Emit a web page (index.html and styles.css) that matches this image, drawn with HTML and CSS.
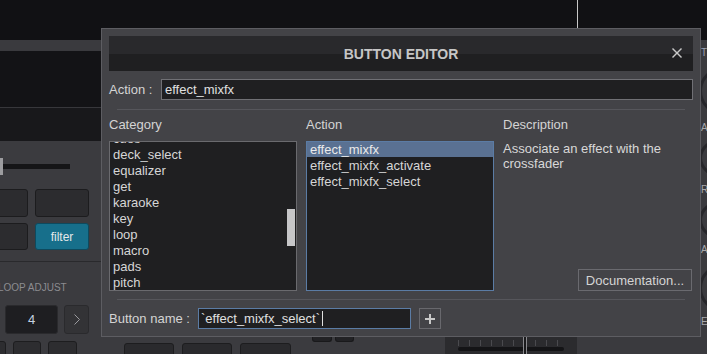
FILE: index.html
```html
<!DOCTYPE html>
<html lang="en">
<head>
    <link rel="stylesheet" href="styles.css">
    <meta charset="UTF-8">
    <title>Button Editor</title>
</head>
<body>

<div class="app">
    <div class="topbar"><div class="topline"></div></div>
    <div class="main">
        <div class="deck">
            <div class="band"></div>
            <div class="screen"></div>
            <div class="screen-low"></div>
            <div class="panel">
                <div class="slider">
                    <div class="slider-handle"></div>
                    <div class="slider-track"></div>
                </div>
                <div class="pad-grid">
                    <div class="pad"></div>
                    <div class="pad"></div>
                    <div class="pad"></div>
                    <div class="pad pad-on">filter</div>
                </div>
                <div class="panel-rule"></div>
                <div class="panel-label">LOOP ADJUST</div>
                <div class="loop-row">
                    <div class="loop-value">4</div>
                    <div class="loop-next">
                        <svg width="6" height="11" viewBox="0 0 6 11"><polyline points="0.5,0.5 5.5,5.5 0.5,10.5" fill="none" stroke="#9a9a9e" stroke-width="1"/></svg>
                    </div>
                </div>
                <div class="transport">
                    <div class="t-btn t-first"></div>
                    <div class="t-btn t-mid"></div>
                    <div class="t-btn t-mid"></div>
                    <div class="t-big t-cue">CUE</div>
                    <div class="t-big">II&gt;</div>
                    <div class="t-big">SYNC</div>
                    <div class="t-small t-s1"></div>
                    <div class="t-small"></div>
                    <div class="xfader">
                        <div class="xfader-ticks"></div>
                        <div class="xfader-track"></div>
                        <div class="xfader-handle"></div>
                    </div>
                </div>
            </div>
        </div>
        <div class="side">
            <div class="side-label side-te">TE</div>
            <div class="knob knob-1"></div>
            <div class="side-label side-a">A</div>
            <div class="knob knob-2"></div>
            <div class="side-label side-r">R</div>
            <div class="knob knob-2"></div>
            <div class="side-label side-at">AT</div>
            <div class="knob knob-1"></div>
            <div class="side-label side-e">E</div>
        </div>
    </div>
</div>

<div class="dialog">
    <div class="dialog-title">
        BUTTON EDITOR
        <svg class="dialog-close" width="10" height="10" viewBox="0 0 10 10">
            <line x1="0.5" y1="0.5" x2="9.5" y2="9.5" stroke="#c8c8c8" stroke-width="1.4"/>
            <line x1="9.5" y1="0.5" x2="0.5" y2="9.5" stroke="#c8c8c8" stroke-width="1.4"/>
        </svg>
    </div>

    <div class="field-row field-action">
        <div class="field-label">Action :</div>
        <div class="field-input">effect_mixfx</div>
    </div>

    <div class="rule"></div>

    <div class="columns">
        <div class="col">
            <div class="col-head">Category</div>
            <div class="listbox">
                <div class="list-items list-scrolled">
                    <div class="list-item">cues</div>
                    <div class="list-item">deck_select</div>
                    <div class="list-item">equalizer</div>
                    <div class="list-item">get</div>
                    <div class="list-item">karaoke</div>
                    <div class="list-item">key</div>
                    <div class="list-item">loop</div>
                    <div class="list-item">macro</div>
                    <div class="list-item">pads</div>
                    <div class="list-item">pitch</div>
                    <div class="list-item">sampler</div>
                </div>
                <div class="scrollbar"><div class="scroll-thumb"></div></div>
            </div>
        </div>
        <div class="col">
            <div class="col-head">Action</div>
            <div class="listbox listbox-focus">
                <div class="list-items">
                    <div class="list-item selected">effect_mixfx</div>
                    <div class="list-item">effect_mixfx_activate</div>
                    <div class="list-item">effect_mixfx_select</div>
                </div>
            </div>
        </div>
        <div class="col col-desc">
            <div class="col-head">Description</div>
            <div class="desc-text">Associate an effect with the crossfader</div>
            <button class="doc-btn">Documentation...</button>
        </div>
    </div>

    <div class="rule rule-bottom"></div>

    <div class="field-row field-name">
        <div class="field-label">Button name :</div>
        <div class="field-input field-focus">`effect_mixfx_select`<span class="caret"></span></div>
        <button class="add-btn">
            <svg width="10" height="10" viewBox="0 0 10 10">
                <rect x="4" y="0" width="2" height="10" fill="#c8c8c8"/>
                <rect x="0" y="4" width="10" height="2" fill="#c8c8c8"/>
            </svg>
        </button>
    </div>
</div>

</body>
</html>
```

FILE: styles.css
```css
*{
    margin: 0;
    padding: 0;
    box-sizing: border-box;
}
html, body{
    width: 707px;
    height: 354px;
    overflow: hidden;
}
body{
    background-color: #111114;
    font-family: "Liberation Sans", Arial, sans-serif;
    font-size: 13px;
    color: #d6d6d6;
    position: relative;
}

/* background app */
.app{
    height: 354px;
    display: flex;
    flex-direction: column;
}
.topbar{
    flex-shrink: 0;
    height: 40px;
    display: flex;
    padding-left: 577px;
}
.topline{
    width: 1px;
    height: 28px;
    background-color: #c8c8c8;
}
.main{
    flex: 1;
    min-height: 0;
    display: flex;
    overflow: hidden;
}
.deck{
    width: 577px;
    display: flex;
    flex-direction: column;
}
.band{
    flex-shrink: 0;
    height: 11px;
    background-color: #3a3a3e;
}
.screen{
    flex-shrink: 0;
    height: 57px;
    background-color: #131316;
    border-bottom: 1px solid #37373b;
}
.screen-low{
    flex-shrink: 0;
    height: 33px;
    background-color: #18181b;
}
.panel{
    flex: 1;
    min-height: 0;
    overflow: hidden;
    background-color: #3b3b3f;
    display: flex;
    flex-direction: column;
}
.panel > *{
    flex-shrink: 0;
}
.slider{
    margin-top: 17px;
    height: 17px;
    display: flex;
    align-items: center;
}
.slider-handle{
    width: 3px;
    height: 17px;
    background-color: #9c9c9f;
}
.slider-track{
    width: 67px;
    height: 5px;
    background-color: #151517;
}
.pad-grid{
    margin-top: 14px;
    margin-left: -6px;
    display: grid;
    grid-template-columns: 34px 54px;
    grid-template-rows: 28px 27px;
    column-gap: 7px;
    row-gap: 6px;
}
.pad{
    background-color: #2c2c2f;
    border: 1px solid #1c1c1e;
    border-radius: 3px;
}
.pad-on{
    background-color: #176f8b;
    border-color: #0e4a5e;
    color: #e4e8ea;
    font-size: 12px;
    display: flex;
    align-items: center;
    justify-content: center;
}
.panel-rule{
    margin-top: 11px;
    height: 1px;
    background-color: #29292c;
}
.panel-label{
    margin-top: 20px;
    margin-left: -2px;
    font-size: 10px;
    line-height: 12px;
    color: #8c8c90;
}
.loop-row{
    margin-top: 11px;
    margin-left: 5px;
    display: flex;
    gap: 6px;
    height: 29px;
}
.loop-value{
    width: 53px;
    background-color: #1e1e21;
    border: 1px solid #2a2a2d;
    border-radius: 3px;
    color: #c4d2e0;
    display: flex;
    align-items: center;
    justify-content: center;
}
.loop-next{
    width: 25px;
    background-color: #333336;
    border: 1px solid #2a2a2d;
    border-radius: 3px;
    display: flex;
    align-items: center;
    justify-content: center;
}
.transport{
    margin-top: 2px;
    height: 28px;
    display: flex;
    align-items: flex-start;
}
.t-btn{
    margin-top: 5px;
    height: 20px;
    width: 34px;
    background-color: #2d2d30;
    border: 1px solid #1d1d1f;
    border-radius: 3px;
}
.t-first{
    width: 14px;
    margin-left: -6px;
}
.t-mid{
    margin-left: 7px;
}
.t-big{
    margin-top: 7px;
    margin-left: 8px;
    width: 61px;
    height: 20px;
    background-color: #2a2a2d;
    border: 1px solid #1d1d1f;
    border-radius: 3px;
    padding-top: 8px;
    text-align: center;
    font-size: 11px;
    font-weight: bold;
    color: #c0c0c0;
}
.t-cue{
    margin-left: 47px;
    width: 60px;
}
.t-small{
    margin-left: 3px;
    width: 23px;
    height: 6px;
    background-color: #222225;
    border: 1px solid #19191b;
    border-top: none;
    border-radius: 0 0 3px 3px;
}
.t-s1{
    margin-left: 21px;
}
.xfader{
    margin-left: 91px;
    width: 160px;
    height: 18px;
    background-color: #2b2b2e;
    position: relative;
}
.xfader-ticks{
    margin: 4px 13px 0;
    height: 6px;
    background-image: linear-gradient(90deg, #4a4a4e 1px, transparent 1px);
    background-size: 11px 6px;
}
.xfader-track{
    margin: 1px 13px 0;
    height: 4px;
    border-radius: 2px;
    background-color: #141416;
}
.xfader-handle{
    position: absolute;
    left: 78px;
    top: 0;
    width: 4px;
    height: 18px;
    background-color: #1a1a1c;
    border-left: 1px solid #8a8a8e;
    border-right: 1px solid #8a8a8e;
}
.side{
    flex: 1;
    background-color: #3a3a3e;
    padding-left: 124px;
    display: flex;
    flex-direction: column;
}
.side > *{
    flex-shrink: 0;
}
.side-label{
    font-size: 10px;
    line-height: 12px;
    color: #a8a8ac;
}
.side-te{ margin-top: 7px; color: #9aa2b4; }
.side-a{ margin-top: 7px; }
.side-r{ margin-top: 6px; }
.side-at{ margin-top: 4px; }
.side-e{ margin-top: 4px; }
.knob{
    margin-left: -2px;
    width: 48px;
    border-radius: 50%;
    border: 3px solid #26262a;
}
.knob-1{
    height: 48px;
    margin-top: 8px;
}
.knob-2{
    height: 40px;
    margin-top: 4px;
}

/* dialog */
.dialog{
    position: absolute;
    left: 101px;
    top: 28px;
    width: 600px;
    height: 309px;
    background-color: #434347;
    border: 1px solid #5d5d62;
    padding: 7px;
    display: flex;
    flex-direction: column;
}
.dialog-title{
    position: relative;
    height: 35px;
    background: linear-gradient(#29292c 50%, #1f1f21 50%);
    display: flex;
    align-items: center;
    justify-content: center;
    font-size: 14px;
    font-weight: bold;
    color: #c6c6c6;
}
.dialog-close{
    position: absolute;
    right: 11px;
    top: 12px;
}
.field-row{
    display: flex;
    align-items: center;
    height: 21px;
}
.field-action{
    margin-top: 8px;
}
.field-label{
    width: 52px;
    color: #d4d4d4;
}
.field-name .field-label{
    width: 89px;
}
.field-input{
    flex: 1;
    height: 21px;
    background-color: #1f1f21;
    border: 1px solid #707075;
    padding: 0 3px;
    line-height: 19px;
    color: #e0e0e0;
    display: flex;
    align-items: center;
}
.field-focus{
    flex: none;
    width: 213px;
    border-color: #5b7ca5;
    padding-left: 2px;
}
.caret{
    width: 1px;
    height: 15px;
    margin-left: 2px;
    background-color: #e0e0e0;
}
.add-btn{
    margin-left: 8px;
    width: 22px;
    height: 21px;
    background-color: #434347;
    border: 1px solid #68686d;
    display: flex;
    align-items: center;
    justify-content: center;
}
.rule{
    margin: 9px 8px 0;
    height: 1px;
    background-color: #56565b;
}
.rule-bottom{
    margin-top: 8px;
}
.columns{
    margin-top: 7px;
    display: grid;
    grid-template-columns: 188px 188px 190px;
    column-gap: 9px;
}
.col{
    display: flex;
    flex-direction: column;
}
.col-head{
    line-height: 16px;
    color: #d4d4d4;
}
.listbox{
    margin-top: 8px;
    height: 150px;
    background-color: #1f1f21;
    border: 1px solid #6a6a6e;
    display: flex;
    overflow: hidden;
}
.listbox-focus{
    border-color: #5b7ca5;
}
.list-items{
    flex: 1;
}
.list-scrolled{
    margin-top: -11px;
}
.list-item{
    height: 16px;
    line-height: 16px;
    padding-left: 3px;
    color: #d6d6d6;
    white-space: nowrap;
}
.list-item.selected{
    height: 15px;
    line-height: 15px;
    background-color: #5a7192;
    color: #eaeaea;
}
.list-item.selected + .list-item{
    margin-top: 1px;
}
.scrollbar{
    width: 9px;
}
.scroll-thumb{
    margin-top: 67px;
    width: 8px;
    height: 37px;
    background-color: #c6c6c8;
}
.desc-text{
    margin-top: 8px;
    line-height: 15px;
    color: #d8d8d8;
}
.doc-btn{
    margin-top: auto;
    align-self: flex-end;
    margin-right: 1px;
    width: 114px;
    height: 22px;
    background-color: #434347;
    border: 1px solid #6a6a6f;
    font-family: "Liberation Sans", Arial, sans-serif;
    font-size: 13px;
    color: #d4d4d4;
}
.field-name{
    margin-top: 8px;
}
```
